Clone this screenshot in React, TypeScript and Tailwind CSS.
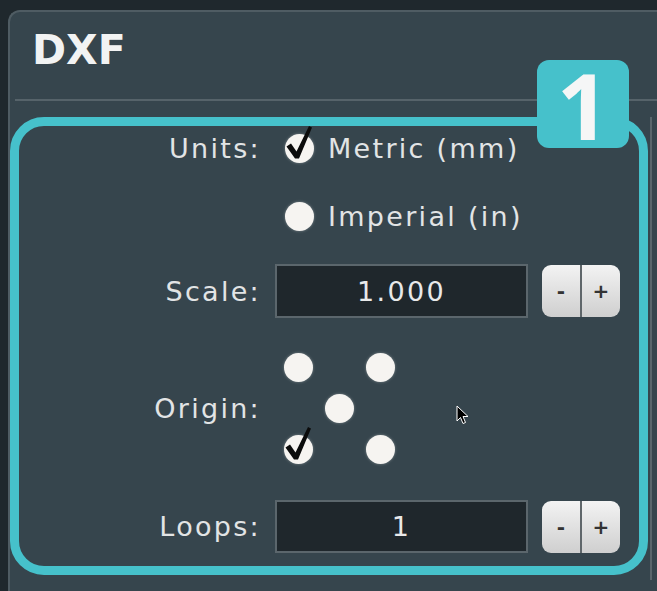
import type { ReactNode } from "react";

const font = { fontFamily: '"DejaVu Sans", Verdana, sans-serif' };

function Check() {
  // calligraphic tick that overflows the top-right of the dot
  return (
    <svg
      className="pointer-events-none absolute left-0 top-0 overflow-visible"
      width={28}
      height={28}
      viewBox="0 0 28 28"
    >
      <path d="M1.5 12.5 L6 9.5 L11.5 17.5 L24 -8 L27 -6.5 L14 24.5 L10 24.5 Z" fill="#0b0b0b" />
    </svg>
  );
}

function Dot({ checked = false }: { checked?: boolean }) {
  return (
    <span className="relative block h-[29px] w-[29px]">
      <span className="block h-[29px] w-[29px] rounded-full bg-[#f6f4f1] shadow-[0_0_3px_rgba(255,255,255,0.35)]" />
      {checked && <Check />}
    </span>
  );
}

function Label({ children }: { children?: ReactNode }) {
  return (
    <span className="w-[242px] shrink-0 text-right text-[27px] leading-none tracking-[2.3px] text-[#e2e4e5]">
      {children}
    </span>
  );
}

function Stepper({ value }: { value: string }) {
  return (
    <>
      <div className="ml-[14px] flex h-full w-[253px] items-center justify-center border-2 border-[#5b666c] bg-[#1f272c] text-[27px] leading-none tracking-[2.3px] text-[#e8e9ea]">
        {value}
      </div>
      <div className="ml-[14px] flex h-[52px] w-[78px] overflow-hidden rounded-[9px] bg-gradient-to-b from-[#f3f3f3] to-[#cfcfcf] text-[20px] font-bold leading-none text-[#333]">
        <span className="flex flex-1 items-center justify-center">-</span>
        <span className="w-[2px] bg-[#5f666a]" />
        <span className="flex flex-1 items-center justify-center">+</span>
      </div>
    </>
  );
}

export default function App() {
  return (
    <div className="relative h-[591px] w-[657px] overflow-hidden bg-[#1f282d] pl-[8px] pt-[10px]" style={font}>
      <div className="h-[600px] w-[680px] rounded-tl-[12px] border-l-2 border-t-2 border-[#4f5c63] bg-[#36454d]">
        <h1 className="ml-[22px] mt-[18px] text-[41px] font-bold leading-[41px] text-[#f2f3f3]">DXF</h1>
        <div className="ml-[5px] mt-[28px] h-[2px] bg-[#56636a]" />

        <div className="mt-[16px] flex">
          <div className="relative h-[458px] w-[638px] shrink-0 rounded-[34px] border-[9px] border-[#46c1cb]">
            {/* step badge */}
            <div
              className="absolute left-[518px] top-[-66px] flex h-[88px] w-[92px] items-center justify-center rounded-[12px] bg-[#46c1cb] pt-[2px] text-[92px] font-bold leading-none text-[#f5f6f6]"
              style={{ fontFamily: '"Open Sans", "Liberation Sans", sans-serif' }}
            >
              1
            </div>

            <div className="flex h-[44px] items-center">
              <Label>Units:</Label>
              <span className="ml-[24px]">
                <Dot checked />
              </span>
              <span className="ml-[14px] text-[27px] leading-none tracking-[2.3px] text-[#e2e4e5]">Metric (mm)</span>
            </div>

            <div className="mt-[24px] flex h-[44px] items-center">
              <Label />
              <span className="ml-[24px]">
                <Dot />
              </span>
              <span className="ml-[14px] text-[27px] leading-none tracking-[2.3px] text-[#e2e4e5]">Imperial (in)</span>
            </div>

            <div className="mt-[26px] flex h-[54px] items-center">
              <Label>Scale:</Label>
              <Stepper value="1.000" />
            </div>

            <div className="mt-[29px] flex h-[123px] items-center">
              <Label>Origin:</Label>
              <div className="ml-[17px] grid h-[123px] w-[123px] grid-cols-3 grid-rows-3">
                <span className="flex items-center justify-center"><Dot /></span>
                <span />
                <span className="flex items-center justify-center"><Dot /></span>
                <span />
                <span className="flex items-center justify-center"><Dot /></span>
                <span />
                <span className="flex items-center justify-center"><Dot checked /></span>
                <span />
                <span className="flex items-center justify-center"><Dot /></span>
              </div>
            </div>

            <div className="mt-[30px] flex h-[53px] items-center">
              <Label>Loops:</Label>
              <Stepper value="1" />
            </div>
          </div>
          <div className="ml-[2px] h-[463px] w-[2px] bg-[#59666c]" />
        </div>

        <div className="ml-[33px] mt-[11px] h-[2px] bg-[#56636a]" />
      </div>

      {/* mouse pointer */}
      <svg className="absolute left-[456px] top-[405px]" width={13} height={20} viewBox="0 0 13 20">
        <path d="M1 1 L1 16 L4.5 12.5 L7 18.5 L9.5 17.5 L7 11.5 L12 11.5 Z" fill="#000" stroke="#fff" strokeWidth={1} />
      </svg>
    </div>
  );
}
